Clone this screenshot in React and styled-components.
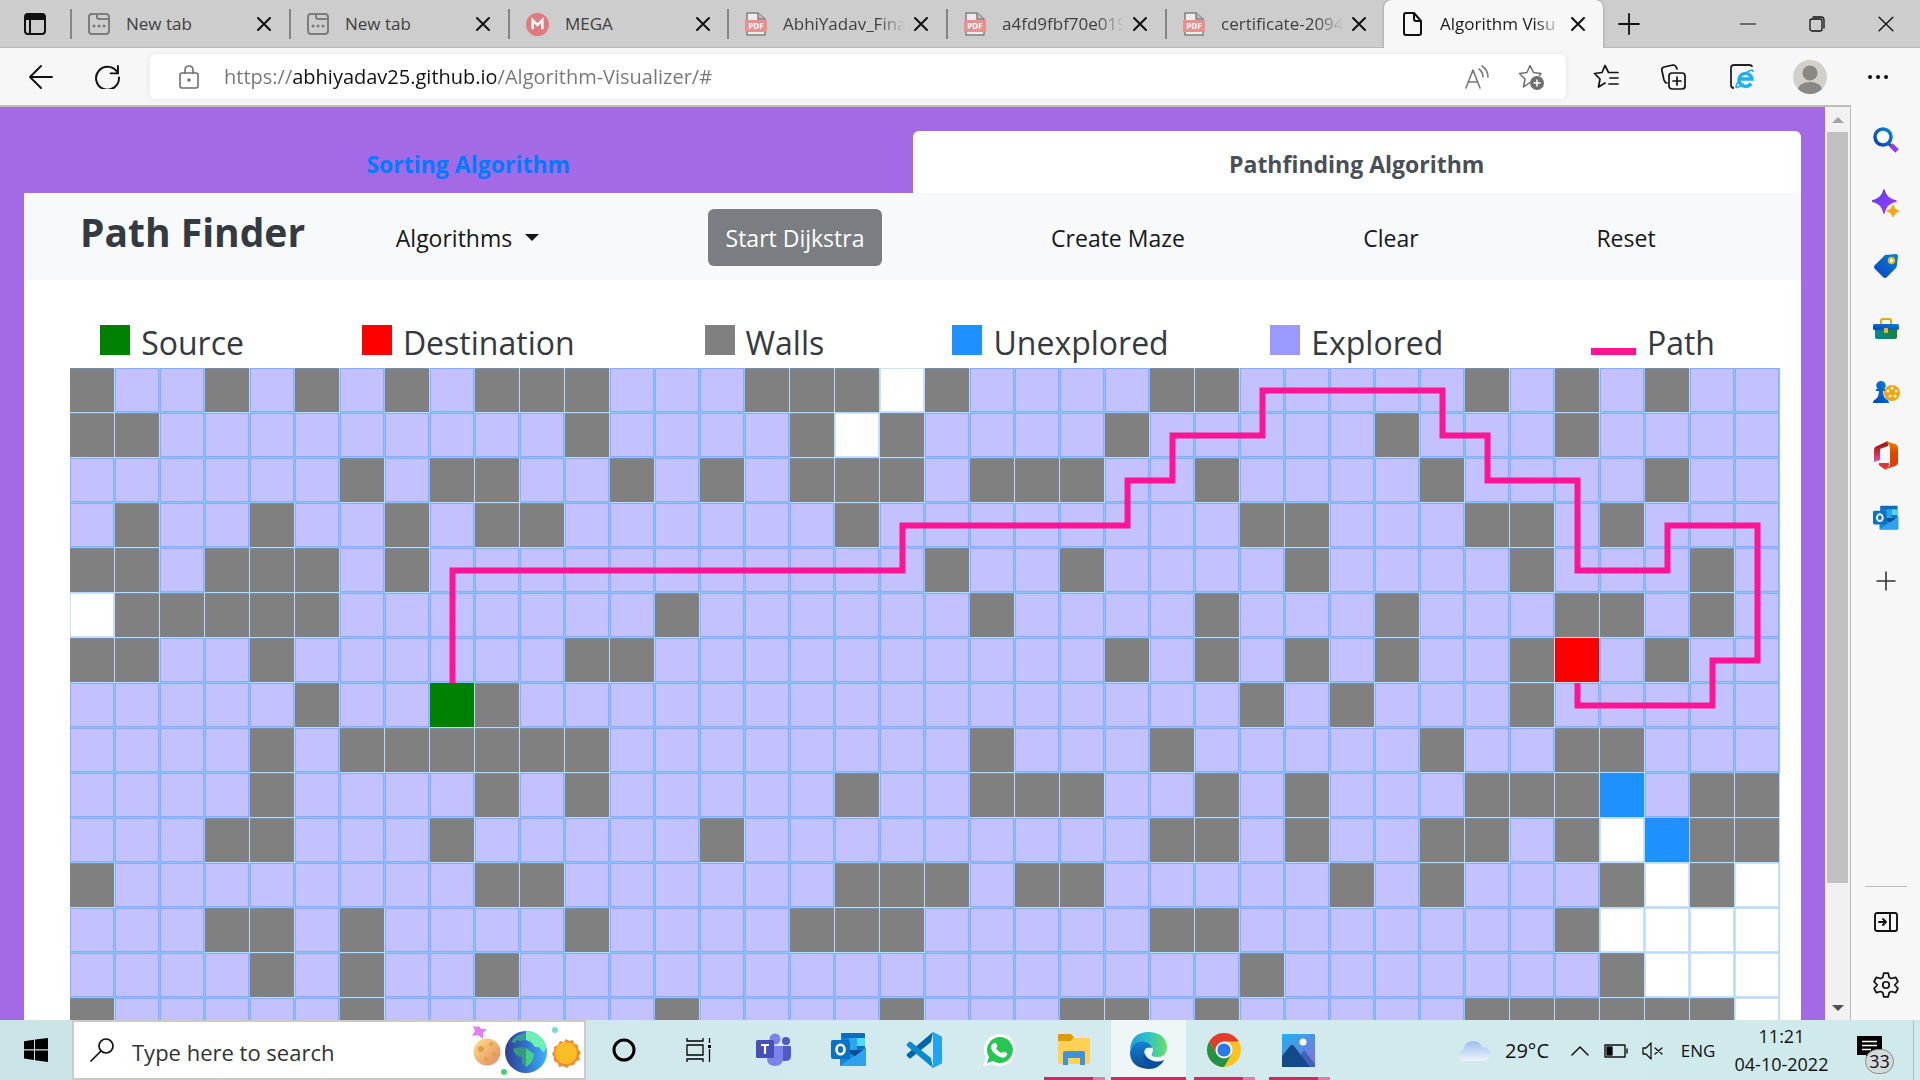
import React from "react";
import styled, { createGlobalStyle, css } from "styled-components";

const Global = createGlobalStyle`
  *, *::before, *::after { box-sizing: border-box; }
  html, body, #root { height: 100%; margin: 0; }
  body { font-family: "Segoe UI", "Open Sans", "Noto Sans", sans-serif; color: #111; overflow: hidden; }
  button, input { font: inherit; color: inherit; }
  svg { display: block; flex: none; }
`;

const plainButton = css`
  border: 0;
  padding: 0;
  margin: 0;
  background: none;
  display: flex;
  align-items: center;
  justify-content: center;
  cursor: pointer;
`;

const Screen = styled.div`
  height: 100vh;
  display: flex;
  flex-direction: column;
  background: #f7f7f7;
`;

/* ---------- browser tabs ---------- */

const TabStrip = styled.header`
  flex: none;
  height: 48px;
  display: flex;
  background: #cdcdcd;
  box-shadow: inset 0 -1px 0 #b9b9b9;
`;

const TabActions = styled.button`
  ${plainButton}
  width: 70px;
`;

const BrowserTab = styled.div`
  flex: 0 1 219px;
  min-width: 0;
  height: 48px;
  display: flex;
  align-items: center;
  position: relative;
  padding-left: 18px;
  font-size: 17px;
  line-height: 24px;
  color: ${(p) => (p.$active ? "#1b1b1b" : "#3f3f3f")};
  ${(p) =>
    p.$active
      ? css`
          background: #f7f7f7;
          border-radius: 8px 8px 0 0;
          box-shadow: 0 0 3px rgba(0, 0, 0, 0.3);
          clip-path: inset(0 -4px 0 -4px);
        `
      : css`
          background: linear-gradient(#858585, #858585) 0 50% / 2px 30px no-repeat;
        `}
`;

const TabTitle = styled.span`
  width: 126px;
  margin-left: 16px;
  white-space: nowrap;
  overflow: hidden;
  mask-image: ${(p) => (p.$fade ? "linear-gradient(90deg, #000 75%, transparent 97%)" : "none")};
`;

const TabClose = styled.button`
  ${plainButton}
  width: 24px;
  height: 24px;
`;

const StripButton = styled.button`
  ${plainButton}
  width: 52px;
`;

const WindowButtons = styled.div`
  margin-left: auto;
  display: flex;
`;

const WindowButton = styled.button`
  ${plainButton}
  width: 69px;
`;

/* ---------- address bar ---------- */

const Toolbar = styled.div`
  flex: none;
  height: 57px;
  display: flex;
  align-items: center;
  padding: 0 8px;
  background: #f7f7f7;
`;

const ToolButton = styled.button`
  ${plainButton}
  width: ${(p) => (p.$nav ? 66 : 68)}px;
  height: 45px;
`;

const AddressBar = styled.div`
  flex: 1;
  min-width: 0;
  height: 45px;
  margin: 0 6px 0 10px;
  display: flex;
  align-items: center;
  background: #fff;
  border-radius: 6px;
  box-shadow: 0 0 6px rgba(0, 0, 0, 0.08);
  padding: 0 8px 0 29px;
`;

const UrlInput = styled.input`
  flex: 1;
  min-width: 0;
  height: 40px;
  margin-left: 25px;
  padding: 0;
  border: 0;
  outline: 0;
  font-size: 20px;
  color: #767676;
  -webkit-text-fill-color: transparent;
  background: linear-gradient(90deg, #767676 68px, #111 68px 272px, #767676 272px);
  background-clip: text;
`;

const AddressButton = styled.button`
  ${plainButton}
  width: 54px;
  height: 40px;
`;

/* ---------- page viewport ---------- */

const Middle = styled.div`
  flex: 1;
  min-height: 0;
  display: flex;
`;

const Viewport = styled.div`
  flex: 1;
  min-width: 0;
  display: flex;
  border-top: 2px solid #bdbdbd;
  border-right: 1px solid #bdbdbd;
`;

const Page = styled.main`
  flex: 1;
  min-width: 0;
  overflow: hidden;
  background: #a46ae6;
  padding: 24px 24px 0;
`;

const Tabs = styled.nav`
  display: grid;
  grid-template-columns: 1fr 1fr;
`;

const PageTab = styled.a`
  height: 62px;
  border-radius: 6px 6px 0 0;
  display: flex;
  align-items: center;
  justify-content: center;
  padding-top: 4px;
  font-size: 23px;
  line-height: 36px;
  font-weight: 700;
  text-decoration: none;
  color: ${(p) => (p.$active ? "#495057" : "#007bff")};
  background: ${(p) => (p.$active ? "#fff" : "transparent")};
`;

const Panel = styled.section`
  background: #fff;
  min-height: 100%;
`;

const NavBar = styled.div`
  display: grid;
  grid-template-columns:
    minmax(0, 281fr) minmax(0, 325fr) minmax(0, 330fr) minmax(0, 316fr)
    minmax(0, 230fr) minmax(0, 240fr) minmax(0, 55fr);
  align-items: center;
  justify-items: center;
  height: 87px;
  padding-top: 2px;
  background: #f8f9fa;
`;

const Brand = styled.h1`
  margin: 0 0 12px;
  padding-left: 56px;
  justify-self: start;
  font-size: 39px;
  line-height: 56px;
  font-weight: 700;
  color: #343a40;
  white-space: nowrap;
`;

const NavButton = styled.button`
  ${plainButton}
  height: 57px;
  padding: 0 18px;
  gap: 13px;
  border-radius: 6px;
  font-size: 23px;
  line-height: 36px;
  white-space: nowrap;
  color: ${(p) => (p.$filled ? "#fff" : "#16181b")};
  background: ${(p) => (p.$filled ? "#7a7e82" : "transparent")};
`;

const Caret = styled.span`
  border: 7px solid transparent;
  border-top-color: #16181b;
  border-bottom: 0;
`;

const Legend = styled.ul`
  margin: 0;
  padding: 39px 0 1px;
  list-style: none;
  display: grid;
  grid-template-columns: repeat(6, 1fr);
`;

const LegendItem = styled.li`
  display: flex;
  align-items: baseline;
  justify-content: center;
  gap: 11px;
  font-size: 32px;
  line-height: 48px;
  color: #343a40;
`;

const Swatch = styled.span`
  width: ${(p) => (p.$line ? 45 : 30)}px;
  height: ${(p) => (p.$line ? 7 : 30)}px;
  background: ${(p) => p.$color};
`;

const Board = styled.div`
  position: relative;
  margin: 0 21px 0 46px;
  display: grid;
  grid-template-columns: repeat(38, 1fr);
`;

const cellLook = {
  e: css`
    background: #c3c1ff;
    border-color: #8cc0ff;
    box-shadow: inset 0 0 0 1px #86adff;
  `,
  w: css`
    background: #808080;
    box-shadow: inset 0 1px 0 #7590ae;
  `,
  o: css`
    background: #fff;
    border-color: #b9d9ff;
    box-shadow: inset 0 0 0 1px #c9e2ff;
  `,
  s: css`
    background: #008000;
  `,
  d: css`
    background: #ff0000;
  `,
  u: css`
    background: #1e90ff;
  `,
};

const Cell = styled.div`
  aspect-ratio: 1;
  border: 0 solid #b4dcff;
  border-width: 0 1px 1px 0;
  ${(p) => cellLook[p.$kind]}
`;

const PathOverlay = styled.svg`
  position: absolute;
  inset: 0;
  width: 100%;
  height: 100%;
`;

const ScrollBar = styled.div`
  width: 25px;
  display: flex;
  flex-direction: column;
  align-items: center;
  background: #f1f1f1;
`;

const ScrollArrow = styled.button`
  ${plainButton}
  width: 25px;
  height: 25px;
`;

const ScrollTrack = styled.div`
  flex: 1;
  width: 21px;
`;

const ScrollThumb = styled.div`
  height: 87%;
  background: #c1c1c1;
`;

/* ---------- edge sidebar ---------- */

const SideBar = styled.aside`
  width: 69px;
  display: flex;
  flex-direction: column;
  align-items: center;
  padding: 3px 0 4px;
  background: #f7f7f7;
`;

const SideButton = styled.button`
  ${plainButton}
  width: 60px;
  height: 63px;
`;

const SideFoot = styled.div`
  margin-top: auto;
  display: flex;
  flex-direction: column;
  align-items: center;
  &::before {
    content: "";
    width: 42px;
    height: 1px;
    margin-bottom: 3px;
    background: #bdbdbd;
  }
`;

/* ---------- task bar ---------- */

const TaskBar = styled.footer`
  flex: none;
  height: 60px;
  display: flex;
  background: linear-gradient(90deg, #c9e3e6, #d3ebee 50%, #d0e9eb);
`;

const StartButton = styled.button`
  ${plainButton}
  width: 72px;
`;

const SearchBox = styled.label`
  width: 514px;
  display: flex;
  align-items: center;
  background: #fff;
  border: 2px solid #cbcbcb;
  padding: 0 2px 0 16px;
`;

const SearchInput = styled.input`
  flex: 1;
  min-width: 0;
  border: 0;
  outline: 0;
  padding: 3px 0 0;
  margin-left: 18px;
  font-size: 22px;
  line-height: 28px;
  background: none;
  &::placeholder { color: #333; opacity: 1; }
`;

const TaskButton = styled.button`
  ${plainButton}
  width: 75px;
  border-bottom: 3px solid transparent;
  padding-top: 3px;
  background: ${(p) => (p.$active ? "#eef6f8" : "none")};
  ${(p) =>
    p.$running &&
    css`
      background: linear-gradient(#cc2a62, #cc2a62) 8px 100% / 49px 3px no-repeat border-box,
        linear-gradient(#dd7fa3, #dd7fa3) 57px 100% / 12px 3px no-repeat border-box;
    `}
  ${(p) => p.$active && css`border-bottom-color: #cc2a62;`}
`;

const Tray = styled.div`
  margin-left: auto;
  display: flex;
  padding-right: 6px;
`;

const TrayButton = styled.button`
  ${plainButton}
  width: ${(p) => p.$w}px;
  gap: 14px;
  font-size: ${(p) => (p.$big ? 20 : 17)}px;
  line-height: 28px;
  padding-top: 2px;
  white-space: nowrap;
`;

const Clock = styled.button`
  ${plainButton}
  width: 111px;
  flex-direction: column;
  font-size: 18px;
  line-height: 28px;
  white-space: nowrap;
`;

const Notifications = styled.button`
  ${plainButton}
  width: 77px;
  justify-content: flex-start;
  padding: 0 0 4px 20px;
  border-right: 1px solid #a9bcbe;
  position: relative;
`;

const Badge = styled.span`
  position: absolute;
  left: 28px;
  top: 29px;
  width: 29px;
  height: 25px;
  border: 1px solid #8b8b8b;
  border-radius: 13px;
  background: #d5dbdd;
  font-size: 18px;
  line-height: 23px;
  text-align: center;
`;

/* ---------- icons ---------- */

const Line = ({ w = 24, h = w, box = "0 0 24 24", sw = 2, color = "#111", children, ...rest }) => (
  <svg width={w} height={h} viewBox={box} fill="none" stroke={color} strokeWidth={sw} strokeLinecap="round" strokeLinejoin="round" aria-hidden="true" {...rest}>
    {children}
  </svg>
);

const CrossIcon = ({ size = 14, sw = 2 }) => (
  <Line w={size} box="0 0 14 14" sw={sw}><path d="M1 1l12 12M13 1L1 13" /></Line>
);

const NewTabIcon = () => (
  <Line w={22} box="0 0 22 22" sw={2} color="#7c7c7c">
    <rect x="1" y="1" width="20" height="20" rx="3" />
    <path d="M9 1v3q0 2 2 2h10" />
    <path d="M6 13h.1M11 13h.1M16 13h.1" strokeWidth="3" />
  </Line>
);

const MegaIcon = () => (
  <svg width="23" height="23" viewBox="0 0 24 24" aria-hidden="true">
    <circle cx="12" cy="12" r="12" fill="#e07a7f" />
    <path d="M7 17V7.500l5 5 5-5V17" fill="none" stroke="#fff" strokeWidth="2.600" />
  </svg>
);

const PdfIcon = () => (
  <svg width="22" height="24" viewBox="0 0 22 24" aria-hidden="true">
    <path d="M2 1h11l7 6v16H2z" fill="#ececec" stroke="#808080" strokeWidth="1.500" />
    <path d="M13 1v6h7" fill="#bdbdbd" stroke="#808080" strokeWidth="1.500" />
    <rect y="8" width="22" height="12" rx="1" fill="#e8908e" />
    <text x="11" y="17" fontSize="8" fontWeight="700" fill="#fff" textAnchor="middle" fontFamily="Open Sans, sans-serif">PDF</text>
  </svg>
);

const PageIcon = () => (
  <Line w={22} h={24} box="0 0 22 24" sw={2}>
    <path d="M4 1h8l7 8v12q0 2-2 2H4q-2 0-2-2V3q0-2 2-2zM12 1v6q0 2 2 2h5" />
  </Line>
);

const TabActionsIcon = () => (
  <Line w={22} box="0 0 22 22" sw={2}>
    <rect x="1" y="1" width="20" height="20" rx="3" />
    <path d="M2 2h18v4H2z" fill="#111" />
    <path d="M6 6v15" />
  </Line>
);

const StarIcon = ({ color, add }) => (
  <Line w={26} box="0 0 26 26" sw={add ? 1.5 : 1.7} color={color}>
    {add ? (
      <>
        <path d="M12 18.500l-6.500 4.500 1.500-8L1.500 9.500l7.500-1L12 1.500l3.500 7 7.500 1-1.500 2" />
        <circle cx="19" cy="19" r="7" fill={color} stroke="none" />
        <path d="M19 16v6M16 19h6" stroke="#fff" />
      </>
    ) : (
      <path d="M12 19l-6.500 4 1.500-8L1.500 9.500l7.500-1L12 1.500l3.500 7H25M17 14h8M16 20h9" />
    )}
  </Line>
);

const ReadAloudIcon = () => (
  <Line w={24} box="0 0 24 24" sw={1.6} color="#7a7a7a">
    <path d="M1 23L8 5l7 18M3 17h10M14 4q4 3 4 8M17 1q6 4 6 11" />
  </Line>
);

const LockIcon = () => (
  <Line w={20} h={24} box="0 0 20 24" sw={1.6} color="#6f6f6f">
    <rect x="1" y="8" width="18" height="15" rx="2" />
    <path d="M6 8V5q0-4 4-4t4 4v3" />
    <circle cx="10" cy="15" r="1" fill="#6f6f6f" />
  </Line>
);

const CollectionsIcon = () => (
  <Line w={26} box="0 0 26 26" sw={1.7}>
    <path d="M6 19q-2 0-3-3L1 7q-1-3 2-4l9-2q3 0 4 4" />
    <rect x="8" y="9" width="16" height="16" rx="3" />
    <path d="M16 13v8M12 17h8" />
  </Line>
);

const IeIcon = () => (
  <svg width="26" height="26" viewBox="0 0 26 26" aria-hidden="true">
    <path d="M5 24q-3 0-3-3V4q0-3 3-3h15q3 0 3 2" fill="none" stroke="#222" strokeWidth="1.800" />
    <path d="M22 19.500a6.500 6.500 0 1 1 1-4.500H11" fill="none" stroke="#1db2ee" strokeWidth="3.400" />
    <path d="M9 18q-4 7 0 5 3-1 6-3M17 9q7-5 7-1" fill="none" stroke="#1db2ee" strokeWidth="1.700" />
  </svg>
);

const AvatarIcon = () => (
  <svg width="34" height="34" viewBox="0 0 34 34" aria-hidden="true">
    <clipPath id="avatar"><circle cx="17" cy="17" r="17" /></clipPath>
    <g clipPath="url(#avatar)">
      <rect width="34" height="34" fill="#d3d0cc" />
      <circle cx="17" cy="13" r="7.500" fill="#8b8784" />
      <ellipse cx="17" cy="30" rx="12" ry="8" fill="#8b8784" />
    </g>
  </svg>
);

const Defs = () => (
  <svg width="0" height="0" style={{ position: "absolute" }} aria-hidden="true">
    <defs>
      <linearGradient id="blue" x1="0" y1="1" x2="1" y2="0"><stop stopColor="#0a3fc4" /><stop offset="1" stopColor="#0a84cf" /></linearGradient>
      <linearGradient id="violet" x1="0" y1="0" x2="1" y2="1"><stop stopColor="#5a3bf0" /><stop offset="1" stopColor="#a43cf4" /></linearGradient>
      <linearGradient id="teal" x1="0" x2="1"><stop stopColor="#0a8494" /><stop offset="1" stopColor="#12853f" /></linearGradient>
      <linearGradient id="officeL" x1="0" y1="0" x2="0" y2="1"><stop stopColor="#8e1414" /><stop offset=".5" stopColor="#c92a34" /><stop offset="1" stopColor="#d659b8" /></linearGradient>
      <linearGradient id="officeR" x1="0" y1="0" x2="0" y2="1"><stop stopColor="#ef8a00" /><stop offset=".4" stopColor="#de4a00" /><stop offset="1" stopColor="#d63a0c" /></linearGradient>
      <linearGradient id="edgeTop" x1="0" y1="0" x2="1" y2="0"><stop stopColor="#1f9fe0" /><stop offset=".5" stopColor="#2fc2c4" /><stop offset="1" stopColor="#6be060" /></linearGradient>
      <linearGradient id="edgeLow" x1="0" y1="0" x2="0" y2="1"><stop stopColor="#1283d6" /><stop offset="1" stopColor="#0c4a96" /></linearGradient>
      <linearGradient id="cloud" x1="0" y1="0" x2="0" y2="1"><stop stopColor="#9ebdf2" /><stop offset="1" stopColor="#eef3fb" /></linearGradient>
      <linearGradient id="moon" x1="0" y1="0" x2="1" y2="1"><stop stopColor="#ffe08a" /><stop offset="1" stopColor="#e2875c" /></linearGradient>
      <linearGradient id="earth" x1="0" x2="1"><stop stopColor="#2f3f92" /><stop offset=".5" stopColor="#2f72c8" /><stop offset="1" stopColor="#3fb2ff" /></linearGradient>
      <linearGradient id="photo" x1="0" y1="0" x2="1" y2="1"><stop stopColor="#1fb0ee" /><stop offset="1" stopColor="#8a6fd8" /></linearGradient>
    </defs>
  </svg>
);

const SideSearch = () => (
  <svg width="26" height="26" viewBox="0 0 26 26" aria-hidden="true">
    <path d="M15 16l4 4" stroke="#444" strokeWidth="3" />
    <path d="M18 18l6 6" stroke="#8c3ff0" strokeWidth="5" />
    <circle cx="10" cy="10" r="8" fill="#fff" stroke="url(#blue)" strokeWidth="3.500" />
  </svg>
);
const SideSparkle = () => (
  <svg width="28" height="28" viewBox="0 0 28 28" aria-hidden="true">
    <path d="M12 1q2 9 12 11-10 2-12 12Q10 14 0 12 10 10 12 1z" fill="url(#violet)" stroke="url(#violet)" strokeWidth="1.500" strokeLinejoin="round" />
    <path d="M21 16q1 5 6 6-5 1-6 6-1-5-6-6 5-1 6-6z" fill="#f0a80a" stroke="#f0a80a" />
  </svg>
);
const SideTag = () => (
  <svg width="26" height="26" viewBox="0 0 26 26" aria-hidden="true">
    <path d="M12 2l11-1q2 0 2 2l-1 9q0 2-2 4l-8 8q-2 2-4 0l-8-8q-2-2 0-4z" fill="url(#blue)" />
    <circle cx="18.500" cy="7.500" r="2.800" fill="#fff" stroke="#f2b30d" strokeWidth="1.800" />
  </svg>
);
const SideToolbox = () => (
  <svg width="26" height="22" viewBox="0 0 26 22" aria-hidden="true">
    <path d="M8 6V3q0-2 2-2h6q2 0 2 2v3" fill="none" stroke="#eba80e" strokeWidth="2.200" />
    <path d="M2 11h22v8q0 2-2 2H4q-2 0-2-2z" fill="url(#teal)" />
    <rect y="6" width="26" height="6" rx="1.500" fill="url(#blue)" />
    <rect x="11" y="10" width="4" height="5" rx="1" fill="#f5b91a" />
  </svg>
);
const SideGames = () => (
  <svg width="28" height="24" viewBox="0 0 28 24" aria-hidden="true">
    <circle cx="20" cy="13" r="8" fill="#eea511" />
    <path d="M20 8h.1M16 11h.1M24 11h.1M18 16h.1M23 16h.1" stroke="#fff3d0" strokeWidth="3" strokeLinecap="round" />
    <path d="M9 1a4.500 4.500 0 0 1 3 8h1v2h-2q0 5 3 8 3 1 3 4H1q0-3 3-4 3-3 3-8H4V9h2a4.500 4.500 0 0 1 3-8z" fill="url(#blue)" />
  </svg>
);
const SideOffice = () => (
  <svg width="26" height="30" viewBox="0 0 26 30" aria-hidden="true">
    <path d="M15 1L4 6Q1 7 1 10v12l6-2V9l8-3z" fill="url(#officeL)" />
    <path d="M13 1l9 3q3 1 3 4v14q0 3-3 4l-9 3 4-4V7z" fill="url(#officeR)" />
    <path d="M6 23h10v2l-3 5-6-4q-2-1-1-3z" fill="#e0343c" />
  </svg>
);
const OutlookIcon = ({ size = 36 }) => (
  <svg width={size} height={size} viewBox="0 0 36 36" aria-hidden="true">
    <path d="M11 1h22q1 0 1 1v16H10V2q0-1 1-1z" fill="#0f6cbc" />
    <path d="M10 6h8v12h-8z" fill="#1780d2" /><path d="M18 6h8v12h-8z" fill="#28a8ea" /><path d="M26 6h8v8h-8z" fill="#50d9ff" />
    <path d="M35 16v17q0 1-1 1H9V18h14z" fill="#1488da" />
    <path d="M35 16L9 34h25q1 0 1-1z" fill="#2fa2ec" />
    <path d="M18 18h14l-8 6-6-3z" fill="#0a4d96" />
    <rect y="8" width="19" height="19" rx="2" fill="#0b70c9" />
    <ellipse cx="9.500" cy="17.500" rx="4" ry="4.700" fill="none" stroke="#fff" strokeWidth="2.600" />
  </svg>
);

const WindowsIcon = () => (
  <svg width="24" height="24" viewBox="0 0 24 24" aria-hidden="true">
    <path d="M0 3.200l10-1.400V11.300H0zM11 1.600L24 0v11.300H11zM0 12.500h10v9.500L0 20.600zM11 12.500h13V24l-13-1.800z" fill="#000" />
  </svg>
);
const SearchArt = () => (
  <svg width="110" height="52" viewBox="0 0 110 52" aria-hidden="true">
    <path d="M6 1l3 4 6 0-4 4 0 6-5-4-6 1 3-5-2-5 5 1z" fill="#e57cf5" />
    <circle cx="15" cy="28" r="13.500" fill="url(#moon)" />
    <g fill="#dfa04a"><circle cx="9" cy="25" r="3" /><circle cx="19" cy="20" r="2" /><circle cx="22" cy="30" r="2" /><circle cx="14" cy="35" r="2" /></g>
    <circle cx="54" cy="28" r="21" fill="url(#earth)" />
    <path d="M54 7a21 21 0 0 1 20 15q0 5-3 6l-4-5q-3 1-5-1l-3-4-5-2z" fill="#6ff0b0" />
    <path d="M54 9v7l-6 1-3-1-2 3-4-1q5-8 15-9z" fill="#3a9a9a" />
    <path d="M41 25q6-3 13-1v19l-4-4v-6q-8-1-9-8z" fill="#37997f" />
    <path d="M54 24l8 6q0 8-8 13z" fill="#45cf8d" />
    <circle cx="83" cy="6" r="3" fill="#6fd9e6" /><circle cx="32" cy="48" r="3" fill="#48cf74" />
    <path d="M94 15l3 2 4-1 1 4 4 1v4l3 3-2 4 1 4-4 1-2 4-4 0-3 3-4-2-4 1-1-4-4-2 0-4-2-3 2-3 0-4 4-2 2-4 4 1z" fill="#f58a2c" />
    <circle cx="94" cy="29" r="11" fill="#f9bd25" />
  </svg>
);
const TaskViewIcon = () => (
  <svg width="26" height="24" viewBox="0 0 26 24" fill="none" stroke="#000" strokeWidth="1.300" aria-hidden="true">
    <path d="M1 0v3h16V0M1 24v-3h16v3M1 7h16v10H1zM23.500 0v5M23.500 11v13" />
    <rect x="22" y="7" width="3" height="3" fill="#000" stroke="none" />
  </svg>
);
const TeamsIcon = () => (
  <svg width="36" height="34" viewBox="0 0 36 34" aria-hidden="true">
    <circle cx="30" cy="8" r="4" fill="#5059c9" /><path d="M25 13h9q1 0 1 1v9q0 5-6 5-5 0-6-4z" fill="#5059c9" />
    <circle cx="19" cy="6" r="5.500" fill="#7b83eb" /><path d="M11 13h16v12q0 8-8 8t-8-8z" fill="#7b83eb" />
    <rect y="7" width="18" height="18" rx="1.500" fill="#464eb8" />
    <path d="M5 12h8M9 12v9" stroke="#fff" strokeWidth="2.200" />
  </svg>
);
const CodeIcon = () => (
  <svg width="36" height="36" viewBox="0 0 36 36" aria-hidden="true">
    <path d="M27 0l-2 10L5 26q-1 1-2 0l-2-2q-1-1 0-2z" fill="#0065a9" />
    <path d="M27 36l-2-10L5 10q-1-1-2 0l-2 2q-1 1 0 2z" fill="#0a88d0" />
    <path d="M27 0l8 4q1 0 1 2v24q0 2-1 2l-8 4z" fill="#24a3f0" />
  </svg>
);
const WhatsAppIcon = () => (
  <svg width="32" height="33" viewBox="0 0 32 33" aria-hidden="true">
    <path d="M16 0a16 16 0 1 1-7 30L0 32l3-8A16 16 0 0 1 16 0z" fill="#fff" />
    <path d="M16 3a13 13 0 1 1-6 24l-6 2 2-6A13 13 0 0 1 16 3z" fill="#25c850" />
    <path d="M11 9q2-1 3 2 1 2-1 3 2 4 6 5 1-2 3-1 3 1 2 3-2 4-7 2-7-3-9-9 0-4 3-5z" fill="#fff" />
  </svg>
);
const FolderIcon = () => (
  <svg width="32" height="32" viewBox="0 -2 32 32" aria-hidden="true">
    <path d="M0 2V0q0-2 1-2h12l3 3-3 4H0z" fill="#dd9c05" />
    <path d="M0 5h13l3-3h15q1 0 1 1v22q0 3-2 3H2q-2 0-2-3z" fill="#ffd256" />
    <path d="M5 29V17q0-2 2-2h18q2 0 2 2v12h-5v-7H10v7z" fill="#3b93d8" />
  </svg>
);
const EdgeIcon = () => (
  <svg width="37" height="37" viewBox="0 0 37 37" aria-hidden="true">
    <path d="M0 20q2-12 13-11 9 1 9 7-8-2-8 6 0 8 9 9 6 1 11-3-5 9-15 9Q0 36 0 20z" fill="url(#edgeLow)" />
    <path d="M0 18Q1 0 19 0q17 1 18 15 0 10-10 10-7 0-5-4 2-3 0-6Q17 8 9 10q-7 2-9 8z" fill="url(#edgeTop)" />
    <path d="M14 20q-3 13 10 14 7 0 10-6-7 3-13 0-6-3-7-8z" fill="#0b4e9f" />
  </svg>
);
const ChromeIcon = () => (
  <svg width="34" height="34" viewBox="0 0 34 34" aria-hidden="true">
    <circle cx="17" cy="17" r="17" fill="#fcc31e" />
    <path d="M17 17L2.300 8.500A17 17 0 0 1 31.700 8.500L17 8.500z" fill="#e33b2e" />
    <path d="M2.300 8.500A17 17 0 0 0 17 34l7.400-12.700L17 17l-7.400 4.300z" fill="#229342" />
    <path d="M2.300 8.500L9.600 21.300 17 8.500z" fill="#e33b2e" />
    <circle cx="17" cy="17" r="8.500" fill="#fff" /><circle cx="17" cy="17" r="6.600" fill="#2b78e8" />
  </svg>
);
const PhotosIcon = () => (
  <svg width="33" height="33" viewBox="0 0 33 33" aria-hidden="true">
    <rect width="33" height="33" rx="1" fill="url(#photo)" />
    <circle cx="21" cy="8" r="3.500" fill="#fff" />
    <path d="M14 28l8-12 11 14v3H14z" fill="#4460b8" />
    <path d="M0 22l8-10q2-2 4 0l16 21H0z" fill="#124a8c" />
  </svg>
);
const CloudIcon = () => (
  <svg width="33" height="22" viewBox="0 0 33 22" aria-hidden="true">
    <path d="M6 21q-6 0-6-5t5-6Q7 1 15 1q7 0 9 6 8 0 8 7t-7 7z" fill="url(#cloud)" />
  </svg>
);
const MessageIcon = () => (
  <svg width="25" height="24" viewBox="0 0 25 24" aria-hidden="true">
    <path d="M0 0h25v19H14l-5 5v-5H0z" fill="#000" />
    <path d="M5 5.500h15M5 9.500h15M5 13.500h9" stroke="#fff" strokeWidth="1.300" />
  </svg>
);

/* ---------- data ---------- */

const browserTabs = [
  { title: "New tab", icon: <NewTabIcon /> },
  { title: "New tab", icon: <NewTabIcon /> },
  { title: "MEGA", icon: <MegaIcon /> },
  { title: "AbhiYadav_Fina", icon: <PdfIcon />, fade: true },
  { title: "a4fd9fbf70e019", icon: <PdfIcon />, fade: true },
  { title: "certificate-2094", icon: <PdfIcon />, fade: true },
  { title: "Algorithm Visu", icon: <PageIcon />, fade: true, active: true },
];

const legend = [
  ["Source", "#008000"],
  ["Destination", "#ff0000"],
  ["Walls", "#808080"],
  ["Unexplored", "#1e90ff"],
  ["Explored", "#9999ff"],
  ["Path", "#ff1493", true],
];

/* w wall, o untouched, e explored, u unexplored, s source, d destination */
const rowSpecs = [
  { w: [0, 3, 5, 7, 9, 10, 11, 15, 16, 17, 19, 24, 25, 31, 33, 35], o: [18] },
  { w: [0, 1, 11, 16, 18, 23, 29, 33], o: [17] },
  { w: [6, 8, 9, 12, 14, 16, 17, 18, 20, 21, 22, 25, 30, 35] },
  { w: [1, 4, 7, 9, 10, 17, 26, 27, 31, 32, 34] },
  { w: [0, 1, 3, 4, 5, 7, 19, 22, 27, 32, 36] },
  { w: [1, 2, 3, 4, 5, 13, 20, 25, 29, 33, 34, 36], o: [0] },
  { w: [0, 1, 4, 11, 12, 23, 25, 27, 29, 32, 35], d: [33] },
  { w: [5, 9, 26, 28, 32], s: [8] },
  { w: [4, 6, 7, 8, 9, 10, 11, 20, 24, 30, 33, 34] },
  { w: [4, 9, 11, 17, 20, 21, 22, 25, 27, 31, 32, 33, 36, 37], u: [34] },
  { w: [3, 4, 8, 14, 24, 25, 27, 30, 31, 33, 36, 37], o: [34], u: [35] },
  { w: [0, 9, 10, 17, 18, 19, 21, 22, 28, 30, 34, 36], o: [35, 37] },
  { w: [3, 4, 6, 11, 16, 17, 18, 24, 25, 33], o: [34, 35, 36, 37] },
  { w: [4, 6, 9, 26, 34], o: [35, 36, 37] },
  { w: [0, 6, 13, 18, 22, 23, 25, 31, 32, 33, 34, 35, 36], o: [37] },
];

const cells = rowSpecs.flatMap((spec) => {
  const row = Array(38).fill("e");
  Object.entries(spec).forEach(([kind, cols]) => cols.forEach((c) => (row[c] = kind)));
  return row;
});

const route = [
  [8, 6.5], [8, 4], [18, 4], [18, 3], [23, 3], [23, 2], [24, 2], [24, 1], [26, 1], [26, 0], [30, 0],
  [30, 1], [31, 1], [31, 2], [33, 2], [33, 4], [35, 4], [35, 3], [37, 3], [37, 6], [36, 6], [36, 7], [33, 7], [33, 6.5],
];
const routePoints = route.map(([x, y]) => `${x * 45 + 22.5},${y * 45 + 22.5}`).join(" ");

const sideTools = [
  ["Search", <SideSearch />],
  ["Discover", <SideSparkle />],
  ["Shopping", <SideTag />],
  ["Tools", <SideToolbox />],
  ["Games", <SideGames />],
  ["Office", <SideOffice />],
  ["Outlook", <OutlookIcon size={26} />],
  ["Customise", <Line w={20} box="0 0 20 20" sw={1.6} color="#333"><path d="M10 1v18M1 10h18" /></Line>],
];

const taskApps = [
  ["Cortana", <svg width="24" height="24" viewBox="0 0 24 24" aria-hidden="true"><circle cx="12" cy="12" r="10" fill="none" stroke="#000" strokeWidth="3" /></svg>],
  ["Task view", <TaskViewIcon />],
  ["Teams", <TeamsIcon />],
  ["Outlook", <OutlookIcon />],
  ["Visual Studio Code", <CodeIcon />],
  ["WhatsApp", <WhatsAppIcon />],
  ["File Explorer", <FolderIcon />, "running"],
  ["Microsoft Edge", <EdgeIcon />, "active"],
  ["Chrome", <ChromeIcon />, "running"],
  ["Photos", <PhotosIcon />, "running"],
];

export default function App() {
  return (
    <Screen>
      <Global />
      <Defs />
      <TabStrip>
        <TabActions aria-label="Tab actions"><TabActionsIcon /></TabActions>
        {browserTabs.map((t, i) => (
          <BrowserTab key={i} $active={t.active}>
            {t.icon}
            <TabTitle $fade={t.fade}>{t.title}</TabTitle>
            <TabClose aria-label="Close tab"><CrossIcon /></TabClose>
          </BrowserTab>
        ))}
        <StripButton aria-label="New tab">
          <Line w={22} box="0 0 22 22" sw={1.8}><path d="M11 1v20M1 11h20" /></Line>
        </StripButton>
        <WindowButtons>
          <WindowButton aria-label="Minimise"><Line w={16} box="0 0 16 16" sw={1.2}><path d="M0 8h16" /></Line></WindowButton>
          <WindowButton aria-label="Restore">
            <Line w={16} box="0 0 16 16" sw={1.3}><rect x="1" y="3" width="12" height="12" rx="2" /><path d="M4 1h8q3 0 3 3v8" /></Line>
          </WindowButton>
          <WindowButton aria-label="Close"><CrossIcon size={16} sw={1.2} /></WindowButton>
        </WindowButtons>
      </TabStrip>

      <Toolbar>
        <ToolButton $nav aria-label="Back"><Line w={24} sw={1.9}><path d="M23 12H1M12 1L1 12l11 11" /></Line></ToolButton>
        <ToolButton $nav aria-label="Reload"><Line w={25} sw={1.9}><path d="M22 9A11 11 0 1 0 23 13M22 2v7h-7" /></Line></ToolButton>
        <AddressBar>
          <LockIcon />
          <UrlInput aria-label="Address" defaultValue="https://abhiyadav25.github.io/Algorithm-Visualizer/#" />
          <AddressButton aria-label="Read aloud"><ReadAloudIcon /></AddressButton>
          <AddressButton aria-label="Add to favourites"><StarIcon color="#6f6f6f" add /></AddressButton>
        </AddressBar>
        <ToolButton aria-label="Favourites"><StarIcon color="#111" /></ToolButton>
        <ToolButton aria-label="Collections"><CollectionsIcon /></ToolButton>
        <ToolButton aria-label="Internet Explorer mode"><IeIcon /></ToolButton>
        <ToolButton aria-label="Profile"><AvatarIcon /></ToolButton>
        <ToolButton aria-label="Settings and more">
          <Line w={24} box="0 0 24 24" sw={4}><path d="M4 12h.1M12 12h.1M20 12h.1" /></Line>
        </ToolButton>
      </Toolbar>

      <Middle>
        <Viewport>
          <Page>
            <Tabs>
              <PageTab href="#">Sorting Algorithm</PageTab>
              <PageTab href="#" $active>Pathfinding Algorithm</PageTab>
            </Tabs>
            <Panel>
              <NavBar>
                <Brand>Path Finder</Brand>
                <NavButton aria-haspopup="menu">Algorithms<Caret /></NavButton>
                <NavButton $filled>Start Dijkstra</NavButton>
                <NavButton>Create Maze</NavButton>
                <NavButton>Clear</NavButton>
                <NavButton>Reset</NavButton>
              </NavBar>
              <Legend>
                {legend.map(([name, color, line]) => (
                  <LegendItem key={name}><Swatch $color={color} $line={line} />{name}</LegendItem>
                ))}
              </Legend>
              <Board>
                {cells.map((kind, i) => <Cell key={i} $kind={kind} />)}
                <PathOverlay viewBox="0 0 1710 675" aria-hidden="true">
                  <polyline points={routePoints} fill="none" stroke="#ff1493" strokeWidth="6" />
                </PathOverlay>
              </Board>
            </Panel>
          </Page>
          <ScrollBar>
            <ScrollArrow aria-label="Scroll up"><svg width="12" height="6" viewBox="0 0 12 6"><path d="M6 0l6 6H0z" fill="#a3a3a3" /></svg></ScrollArrow>
            <ScrollTrack><ScrollThumb /></ScrollTrack>
            <ScrollArrow aria-label="Scroll down"><svg width="12" height="6" viewBox="0 0 12 6"><path d="M0 0h12L6 6z" fill="#505050" /></svg></ScrollArrow>
          </ScrollBar>
        </Viewport>
        <SideBar>
          {sideTools.map(([name, icon]) => <SideButton key={name} aria-label={name}>{icon}</SideButton>)}
          <SideFoot>
            <SideButton aria-label="Hide sidebar">
              <Line w={24} h={20} box="0 0 24 20" sw={1.9}><rect x="1" y="1" width="22" height="18" rx="2" /><path d="M16 1v18M5 10h7M9 7l3 3-3 3" /></Line>
            </SideButton>
            <SideButton aria-label="Settings">
              <Line w={26} sw={1.6}>
                <path d="M10 1h4l1 4 2 1 4-1 2 4-3 3 3 3-2 4-4-1-2 1-1 4h-4l-1-4-2-1-4 1-2-4 3-3-3-3 2-4 4 1 2-1z" />
                <circle cx="12" cy="12" r="3" />
              </Line>
            </SideButton>
          </SideFoot>
        </SideBar>
      </Middle>

      <TaskBar>
        <StartButton aria-label="Start"><WindowsIcon /></StartButton>
        <SearchBox>
          <Line w={24} sw={1.7}><circle cx="16" cy="8" r="7" /><path d="M11 13L1 23" /></Line>
          <SearchInput aria-label="Search" placeholder="Type here to search" />
          <SearchArt />
        </SearchBox>
        {taskApps.map(([name, icon, state]) => (
          <TaskButton key={name} aria-label={name} $running={state === "running"} $active={state === "active"}>{icon}</TaskButton>
        ))}
        <Tray>
          <TrayButton $w={117} $big><CloudIcon />29°C</TrayButton>
          <TrayButton $w={36} aria-label="Hidden icons"><Line w={18} h={10} box="0 0 18 10" sw={1.5}><path d="M1 9l8-8 8 8" /></Line></TrayButton>
          <TrayButton $w={36} aria-label="Battery">
            <Line w={24} h={14} box="0 0 24 14" sw={1.4}><path d="M1 1h20v12H1zM23 5v4" /><path d="M3 3h5v8H3z" fill="#000" /></Line>
          </TrayButton>
          <TrayButton $w={36} aria-label="Sound">
            <Line w={21} h={18} box="0 0 21 18" sw={1.3}><path d="M1 6h3l5-5v16l-5-5H1zM13 6l7 6M20 6l-7 6" /></Line>
          </TrayButton>
          <TrayButton $w={56}>ENG</TrayButton>
          <Clock><span>11:21</span><span>04-10-2022</span></Clock>
          <Notifications aria-label="33 notifications"><MessageIcon /><Badge>33</Badge></Notifications>
        </Tray>
      </TaskBar>
    </Screen>
  );
}
